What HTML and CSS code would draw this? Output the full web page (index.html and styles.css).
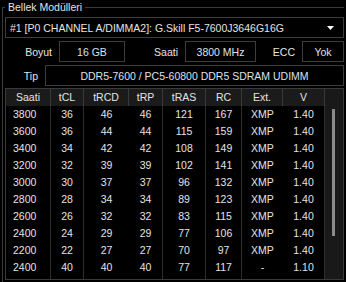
FILE: index.html
```html
<!DOCTYPE html>
<html>
<head>
  <meta charset="utf-8">
  <title>Bellek Modülleri</title>
  <link rel="stylesheet" href="styles.css">
</head>
<body>
  <fieldset class="group">
    <legend>Bellek Modülleri</legend>

    <div class="select">
      <span>#1 [P0 CHANNEL A/DIMMA2]: G.Skill F5-7600J3646G16G</span>
      <svg class="arrow" width="7" height="4" viewBox="0 0 7 4"><path d="M0 0H7L3.5 4Z" fill="#fff"/></svg>
    </div>

    <div class="info-row">
      <span class="label lbl-size">Boyut</span><span class="field fld-size">16 GB</span>
      <span class="label lbl-speed">Saati</span><span class="field fld-speed">3800 MHz</span>
      <span class="label lbl-ecc">ECC</span><span class="field fld-ecc">Yok</span>
    </div>

    <div class="type-row">
      <span class="label lbl-type">Tip</span>
      <span class="field fld-type">DDR5-7600 / PC5-60800 DDR5 SDRAM UDIMM</span>
    </div>

    <div class="list">
      <div class="row head">
        <span>Saati</span><span>tCL</span><span>tRCD</span><span>tRP</span><span>tRAS</span><span>RC</span><span>Ext.</span><span>V</span><span class="sb"></span>
      </div>
      <div class="body">
        <div class="row"><span class="freq">3800</span><span>36</span><span>46</span><span>46</span><span>121</span><span>167</span><span>XMP</span><span>1.40</span><span class="sb"></span></div>
        <div class="row"><span class="freq">3600</span><span>36</span><span>44</span><span>44</span><span>115</span><span>159</span><span>XMP</span><span>1.40</span><span class="sb"></span></div>
        <div class="row"><span class="freq">3400</span><span>34</span><span>42</span><span>42</span><span>108</span><span>149</span><span>XMP</span><span>1.40</span><span class="sb"></span></div>
        <div class="row"><span class="freq">3200</span><span>32</span><span>39</span><span>39</span><span>102</span><span>141</span><span>XMP</span><span>1.40</span><span class="sb"></span></div>
        <div class="row"><span class="freq">3000</span><span>30</span><span>37</span><span>37</span><span>96</span><span>132</span><span>XMP</span><span>1.40</span><span class="sb"></span></div>
        <div class="row"><span class="freq">2800</span><span>28</span><span>34</span><span>34</span><span>89</span><span>123</span><span>XMP</span><span>1.40</span><span class="sb"></span></div>
        <div class="row"><span class="freq">2600</span><span>26</span><span>32</span><span>32</span><span>83</span><span>115</span><span>XMP</span><span>1.40</span><span class="sb"></span></div>
        <div class="row"><span class="freq">2400</span><span>24</span><span>29</span><span>29</span><span>77</span><span>106</span><span>XMP</span><span>1.40</span><span class="sb"></span></div>
        <div class="row"><span class="freq">2200</span><span>22</span><span>27</span><span>27</span><span>70</span><span>97</span><span>XMP</span><span>1.40</span><span class="sb"></span></div>
        <div class="row"><span class="freq">2400</span><span>40</span><span>40</span><span>40</span><span>77</span><span>117</span><span>-</span><span>1.10</span><span class="sb"></span></div>
        <div class="row"><span class="freq"></span><span></span><span></span><span></span><span></span><span></span><span></span><span></span><span class="sb"></span></div>
      </div>
      <div class="thumb"></div>
    </div>
  </fieldset>
</body>
</html>
```

FILE: styles.css
```css
body {
  margin: 0;
  background: #000;
  color: #e4e4e4;
  font-family: "Liberation Sans", Arial, sans-serif;
  font-size: 10.5px;
}

.group {
  margin: 0 2px 0 2px;
  padding: 2px 0 0 2px;
  border: 1px solid #3a3a3a;
  border-right: 0;
  border-bottom: 0;
  min-width: 0;
  height: 282px;
  box-sizing: border-box;
}

.group legend {
  padding: 0 3px;
  line-height: 15px;
}

.select {
  height: 21px;
  box-sizing: border-box;
  border: 1px solid #3c3c3c;
  display: flex;
  align-items: center;
  justify-content: space-between;
  padding: 0 9px 0 4px;
}

.info-row,
.type-row {
  display: flex;
  align-items: center;
  margin-top: 3px;
  height: 21px;
}

.type-row {
  margin-bottom: 2px;
}

.label {
  text-align: right;
  margin-right: 7px;
}

.lbl-size { width: 47px; }
.lbl-speed { width: 53px; }
.lbl-ecc { width: 39px; }
.lbl-type { width: 33px; }

.field {
  height: 21px;
  box-sizing: border-box;
  border: 1px solid #3c3c3c;
  display: flex;
  align-items: center;
  justify-content: center;
  color: #dde2ec;
}

.fld-size { width: 66px; }
.fld-speed { width: 71px; }
.fld-ecc { width: 42px; }
.fld-type { flex: 1; }

.list {
  position: relative;
  border: 1px solid #3a3a3a;
  height: 192px;
  box-sizing: border-box;
  overflow: hidden;
}

.row {
  display: grid;
  grid-template-columns: 45px 33px 45px 34px 43px 36px 41px 42px 18px;
  height: 17px;
  line-height: 17px;
  text-align: center;
}

.row span {
  box-sizing: border-box;
  white-space: nowrap;
}

.head {
  background: #1b1b1b;
}

.head span {
  border-right: 1px solid #3a3a3a;
}

.head span:last-child {
  border-right: 0;
}

.body .row span:nth-child(1),
.body .row span:nth-child(2),
.body .row span:nth-child(4),
.body .row span:nth-child(5),
.body .row span:nth-child(6),
.body .row span:nth-child(8) {
  border-right: 1px solid #2e2e2e;
}

.body .freq {
  text-align: left;
  padding-left: 7px;
}

.sb {
  background: #191919;
}

.thumb {
  position: absolute;
  left: 326px;
  top: 20px;
  width: 3px;
  height: 127px;
  background: #8a8a8a;
}
```
